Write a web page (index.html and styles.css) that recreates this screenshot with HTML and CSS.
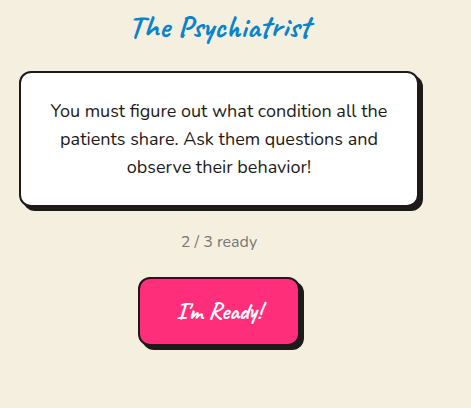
FILE: index.html
```html
<!DOCTYPE html>
<html lang="en">
<head>
    <meta charset="UTF-8">
    <meta name="viewport" content="width=device-width, initial-scale=1.0">
    <title>The Psychiatrist</title>
    <link rel="stylesheet" href="styles.css">
</head>
<body>

<main class="container">
    <h1>The Psychiatrist</h1>

    <div class="card">
        <p>You must figure out what condition all the patients share. Ask them questions and observe their behavior!</p>
    </div>

    <p class="ready-count">2 / 3 ready</p>

    <button class="ready-button" type="button">I'm Ready!</button>
</main>

</body>
</html>
```

FILE: styles.css
```css
* {
    box-sizing: border-box;
}
body {
    margin: 0;
    background-color: #f5efdf;
    color: #1e1a1a;
    font-family: Nunito, "Open Sans", sans-serif;
}
.container {
    display: flex;
    flex-direction: column;
    align-items: center;
    padding: 7px 52px 56px 19px;
}
h1 {
    margin: 0 0 24px;
    color: #0984ca;
    font-family: Caveat, "Comic Sans MS", cursive;
    font-size: 32px;
    font-weight: 700;
    line-height: 40px;
}
.card {
    width: 100%;
    padding: 24px;
    background: #fff;
    border: 2px solid #1e1a1a;
    border-radius: 12px;
    box-shadow: 4px 4px 0 #1e1a1a;
    text-align: center;
}
.card p {
    margin: 0;
    font-size: 18px;
    line-height: 28px;
}
.ready-count {
    margin: 24px 0;
    color: #777;
    font-size: 16px;
    line-height: 22px;
}
.ready-button {
    padding: 20px 36px;
    background: #ff2e7a;
    color: #fff;
    border: 2px solid #1e1a1a;
    border-radius: 12px;
    box-shadow: 4px 4px 0 #1e1a1a;
    font-family: Caveat, "Comic Sans MS", cursive;
    font-size: 24px;
    font-weight: 700;
    line-height: 25px;
    cursor: pointer;
}
```
